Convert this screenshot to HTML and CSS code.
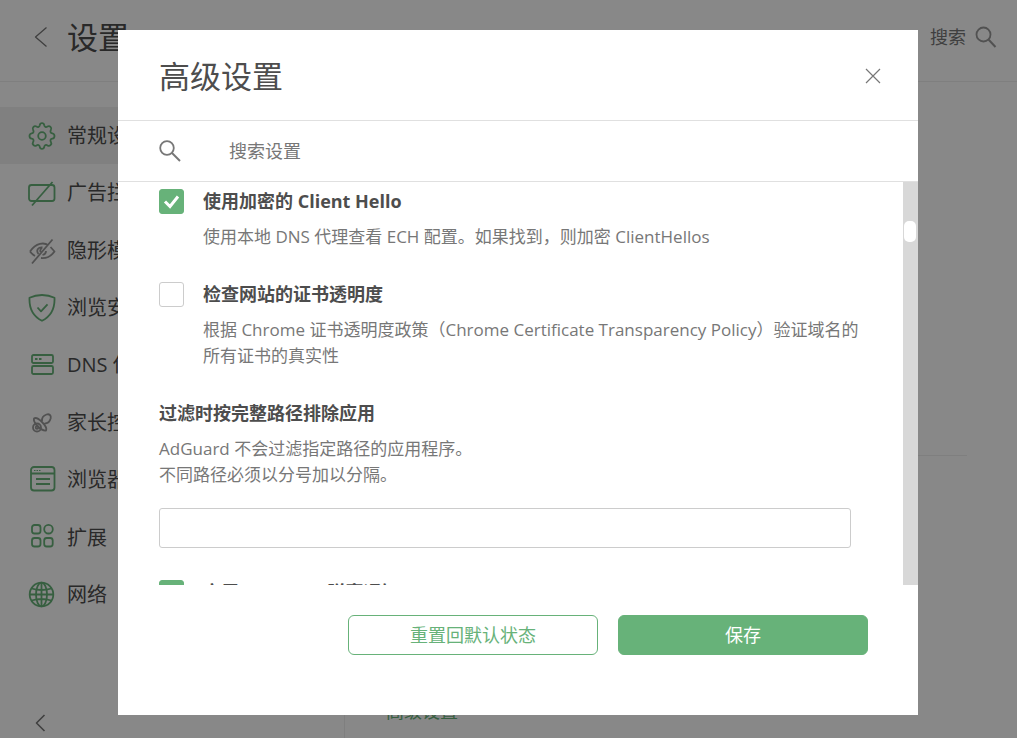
FILE: index.html
```html
<!DOCTYPE html>
<html lang="zh-CN">
<head>
    <meta charset="UTF-8">
    <meta name="viewport" content="width=device-width, initial-scale=1.0">
    <title>高级设置</title>
    <link rel="stylesheet" href="styles.css">
</head>
<body>
    <div class="page">
        <header class="page-header">
            <button type="button" class="icon-btn" aria-label="返回">
                <svg width="14" height="20" viewBox="0 0 14 20"><path d="M12.500.5 1.500 10l11 9.500" stroke-width="1.300"/></svg>
            </button>
            <h1>设置</h1>
            <button type="button" class="page-search">
                搜索
                <svg width="22" height="22" viewBox="0 0 22 22"><circle cx="8.500" cy="8.500" r="7" stroke-width="1.800"/><path d="m13.500 13.500 7 7.500" stroke-width="2"/></svg>
            </button>
        </header>

        <div class="page-body">
            <aside class="sidebar">
                <nav>
                    <a href="#general" class="active">
                        <svg width="28" height="28" viewBox="0 0 28 28"><circle cx="14" cy="14" r="3.800"/><path d="M14 1.200c1.500 0 2 .6 2.200 2 .3 1.800 1.800 2.400 3.300 1.400 1.200-.8 2-.7 3 .3s1.200 1.900.4 3.100c-1 1.500-.4 3 1.400 3.300 1.600.3 2.200.8 2.200 2.700s-.6 2.400-2.200 2.700c-1.800.3-2.400 1.800-1.400 3.300.8 1.200.6 2.100-.4 3.100s-1.800 1.100-3 .3c-1.500-1-3-.4-3.300 1.400-.2 1.400-.7 2-2.200 2s-2-.6-2.200-2c-.3-1.800-1.800-2.400-3.300-1.400-1.200.8-2 .7-3-.3s-1.200-1.900-.4-3.100c1-1.500.4-3-1.400-3.300-1.600-.3-2.200-.8-2.200-2.700s.6-2.400 2.200-2.700c1.800-.3 2.400-1.800 1.400-3.300-.8-1.200-.6-2.100.4-3.100s1.800-1.100 3-.3c1.500 1 3 .4 3.300-1.400.2-1.400.7-2 2.200-2z"/></svg>
                        <span>常规设置</span>
                    </a>
                    <a href="#adblock">
                        <svg width="28" height="28" viewBox="0 0 28 28"><rect x="1" y="6" width="25.500" height="16" rx="2.500"/><path d="M24.500 3 4 26.500"/></svg>
                        <span>广告拦截</span>
                    </a>
                    <a href="#stealth" class="off">
                        <svg width="28" height="28" viewBox="0 0 28 28"><path d="M2 14.500c6-8.600 14-9.600 18.500-6M2 14.500c1.500 2 3 3.300 5 4.500M22.500 10l4 4.500c-4 5.600-8.500 7-13.500 6.500M10.500 17c-3-4 0-7 4-6.500M14 11c-1.800 1-2 2.500-1.500 4M18 14c0 2.500-1.500 3.500-3.500 4M24.500 2.500 4 26.500"/></svg>
                        <span>隐形模式</span>
                    </a>
                    <a href="#security">
                        <svg width="28" height="28" viewBox="0 0 28 28"><path d="M14 1c4.200 0 8.800 1 12.500 2.800C27 15 22.500 22.500 14 26.800 5.500 22.500 1 15 1.500 3.800 5.200 2 9.800 1 14 1zM9.500 13.500l3.500 3.800 6.500-7"/></svg>
                        <span>浏览安全</span>
                    </a>
                    <a href="#dns">
                        <svg width="28" height="28" viewBox="0 0 28 28"><rect x="4" y="4" width="21" height="8" rx="1.500"/><rect x="4" y="15" width="21" height="8" rx="1.500"/><path d="M7 8h2.500M11 8h2.500"/></svg>
                        <span>DNS 保护</span>
                    </a>
                    <a href="#parental" class="off">
                        <svg width="28" height="28" viewBox="0 0 28 28"><circle cx="9" cy="18.500" r="4"/><circle cx="9" cy="18.500" r="1.300"/><path d="M6 9.500c2-1.500 5 .5 8 3.500s5 6.500 4 8.500c-3 .5-5.500-1.500-8-4S5 12.500 6 9.500zM14 12c-.3-3.500 1.500-5.500 4.500-6.500 3-.9 4.800.9 4.200 3.800-.8 3.200-2.900 5.200-6.200 5.400"/></svg>
                        <span>家长控制</span>
                    </a>
                    <a href="#assistant">
                        <svg width="28" height="28" viewBox="0 0 28 28"><rect x="3" y="1" width="23.500" height="23.500" rx="3"/><path d="M3 7.500h23.500M8 13h14M8 18h14"/><path d="M6 4.500h7" stroke-dasharray="1.500 1" stroke-width="1.200"/></svg>
                        <span>浏览器助手</span>
                    </a>
                    <a href="#extensions">
                        <svg width="28" height="28" viewBox="0 0 28 28"><rect x="4" y="1" width="8.500" height="8.500" rx="2.500"/><circle cx="20.500" cy="5.200" r="4.300"/><rect x="4" y="14" width="8.500" height="8.500" rx="2.500"/><rect x="16.200" y="14" width="8.500" height="8.500" rx="2.500"/></svg>
                        <span>扩展</span>
                    </a>
                    <a href="#network">
                        <svg width="28" height="28" viewBox="0 0 28 28"><circle cx="13.500" cy="13.500" r="11.800"/><ellipse cx="13.500" cy="13.500" rx="5.500" ry="11.800"/><path d="M13.500 1.700v23.600M1.700 13.500h23.600M3.500 7.500c6 1.800 14 1.800 20 0M3.500 19.500c6-1.800 14-1.800 20 0"/></svg>
                        <span>网络</span>
                    </a>
                </nav>
                <div class="sidebar-footer">
                    <button type="button" class="icon-btn" aria-label="收起菜单">
                        <svg width="14" height="20" viewBox="0 0 14 20"><path d="M11.500 2 3.500 10l8 8" stroke-width="1.600"/></svg>
                    </button>
                </div>
            </aside>
            <main class="main">
                <div class="main-section"></div>
                <div class="main-links">
                    <a href="#advanced">高级设置</a>
                </div>
            </main>
        </div>
    </div>

    <div class="overlay">
        <div class="modal" role="dialog" aria-modal="true" aria-labelledby="modal-title">
            <div class="modal-header">
                <h2 id="modal-title">高级设置</h2>
                <button type="button" class="icon-btn" aria-label="关闭">
                    <svg width="16" height="16" viewBox="0 0 16 16"><path d="m1 1 14 14M15 1 1 15" stroke-width="1.200"/></svg>
                </button>
            </div>
            <label class="modal-search">
                <svg width="22" height="22" viewBox="0 0 22 22"><circle cx="8" cy="8" r="6.800" stroke-width="1.800"/><path d="m13 13 8 8" stroke-width="2"/></svg>
                <input type="text" placeholder="搜索设置" aria-label="搜索设置">
            </label>
            <div class="modal-body">
                <div class="options">
                    <div class="option">
                        <input type="checkbox" id="ech" checked>
                        <div>
                            <label for="ech">使用加密的 Client Hello</label>
                            <p>使用本地 DNS 代理查看 ECH 配置。如果找到，则加密 ClientHellos</p>
                        </div>
                    </div>
                    <div class="option">
                        <input type="checkbox" id="transparency">
                        <div>
                            <label for="transparency">检查网站的证书透明度</label>
                            <p>根据 Chrome 证书透明度政策（Chrome Certificate Transparency Policy）验证域名的所有证书的真实性</p>
                        </div>
                    </div>
                    <div class="field">
                        <label for="paths">过滤时按完整路径排除应用</label>
                        <p>AdGuard 不会过滤指定路径的应用程序。<br>不同路径必须以分号加以分隔。</p>
                        <input type="text" id="paths">
                    </div>
                    <div class="option">
                        <input type="checkbox" id="popups" checked>
                        <div>
                            <label for="popups">启用 AdGuard 弹窗通知</label>
                        </div>
                    </div>
                </div>
                <div class="scrollbar"><div class="thumb"></div></div>
            </div>
            <div class="modal-footer">
                <button type="button" class="btn">重置回默认状态</button>
                <button type="button" class="btn btn-primary">保存</button>
            </div>
        </div>
    </div>
</body>
</html>
```
FILE: styles.css
```css
* {
    margin: 0;
    padding: 0;
    box-sizing: border-box;
}

body {
    font-family: "Open Sans", "Noto Sans CJK SC", sans-serif;
    font-size: 18px;
    line-height: 26px;
    font-weight: 400;
    color: #4d4d4d;
    background: #fff;
    overflow: hidden;
}

button,
input {
    font: inherit;
    color: inherit;
}

button {
    border: none;
    background: none;
    cursor: pointer;
}

a {
    color: inherit;
    text-decoration: none;
}

svg {
    display: block;
    flex: none;
    fill: none;
    stroke: currentColor;
    stroke-width: 1.8;
    stroke-linejoin: round;
}

h1,
h2 {
    font-size: 31px;
    line-height: 40px;
    font-weight: 400;
}

/* Página de fundo */
.page {
    display: flex;
    flex-direction: column;
    height: 100vh;
}

.page-header {
    display: flex;
    align-items: center;
    padding: 0 20px 8px 34px;
    height: 82px;
    border-bottom: 1px solid #eee;
}

.page-header h1 {
    flex: 1;
    margin-left: 19px;
}

.icon-btn {
    color: #777;
}

.page-search {
    display: flex;
    align-items: center;
    gap: 9px;
    color: #777;
}

.page-search svg {
    color: #999;
}

.page-body {
    flex: 1;
    display: flex;
    min-height: 0;
}

.sidebar {
    display: flex;
    flex-direction: column;
    width: 345px;
    padding-top: 25px;
    border-right: 1px solid #eee;
}

.sidebar nav {
    flex: 1;
    display: flex;
    flex-direction: column;
}

.sidebar nav a {
    flex: 1;
    display: flex;
    align-items: center;
    gap: 11px;
    padding-left: 28px;
    font-size: 20px;
}

.sidebar nav a svg {
    color: #67b279;
}

.sidebar nav a.off svg {
    color: #999;
}

.sidebar nav a.active {
    background: #f0f0f0;
}

.sidebar-footer {
    display: flex;
    align-items: flex-end;
    height: 114px;
    padding: 0 0 5px 33px;
}

.main {
    flex: 1;
    display: flex;
    flex-direction: column;
    padding: 0 50px 0 41px;
}

.main-section {
    flex: 1;
    border-bottom: 1px solid #eee;
}

.main-links {
    display: flex;
    align-items: flex-end;
    height: 282px;
    padding-bottom: 14px;
    color: #67b279;
}

/* Modal */
.overlay {
    position: fixed;
    inset: 0;
    display: flex;
    padding: 30px 99px 23px 118px;
    background: rgba(0, 0, 0, 0.465);
}

.modal {
    flex: 1;
    display: flex;
    flex-direction: column;
    min-width: 0;
    background: #fff;
}

.modal-header {
    display: flex;
    align-items: center;
    justify-content: space-between;
    height: 91px;
    padding: 2px 37px 0 41px;
    border-bottom: 1px solid #e0e0e0;
}

.modal-search {
    display: flex;
    align-items: center;
    gap: 48px;
    height: 61px;
    padding: 0 41px;
    border-bottom: 1px solid #e0e0e0;
    color: #777;
}

.modal-search input {
    flex: 1;
    border: none;
    outline: none;
    background: none;
}

.modal-search input::placeholder {
    color: #777;
    opacity: 1;
}

.modal-body {
    flex: 1;
    display: flex;
    min-height: 0;
    overflow: hidden;
}

.options {
    flex: 1;
    display: flex;
    flex-direction: column;
    gap: 31px;
    padding: 6px 41px 0;
}

.option {
    display: flex;
    align-items: flex-start;
    gap: 19px;
}

.option label,
.field label {
    display: block;
    margin-bottom: 10px;
    font-weight: 700;
}

.option p,
.field p {
    font-size: 17px;
    color: #777;
}

.option input {
    appearance: none;
    flex: none;
    width: 25px;
    height: 25px;
    margin-top: 1px;
    border: 1px solid #ccc;
    border-radius: 3px;
}

.option input:checked {
    border-color: #67b279;
    background: #67b279 url("data:image/svg+xml,%3Csvg xmlns='http://www.w3.org/2000/svg' viewBox='0 0 25 25'%3E%3Cpath d='M6 12.500l5 5 8-10' fill='none' stroke='white' stroke-width='3'/%3E%3C/svg%3E") center / 25px 25px;
}

.field input {
    display: block;
    width: calc(100% - 11px);
    height: 40px;
    margin-top: 20px;
    padding: 0 10px;
    border: 1px solid #ccc;
    border-radius: 3px;
}

.scrollbar {
    width: 15px;
    padding: 39px 2px 0 1px;
    background: #d8d8d8;
}

.thumb {
    height: 21px;
    border-radius: 5px;
    background: #fff;
}

.modal-footer {
    display: flex;
    justify-content: flex-end;
    gap: 20px;
    height: 130px;
    padding: 30px 50px 0;
}

.btn {
    width: 250px;
    height: 40px;
    border: 1px solid #67b279;
    border-radius: 6px;
    color: #67b279;
}

.btn-primary {
    background: #67b279;
    color: #fff;
}
```
